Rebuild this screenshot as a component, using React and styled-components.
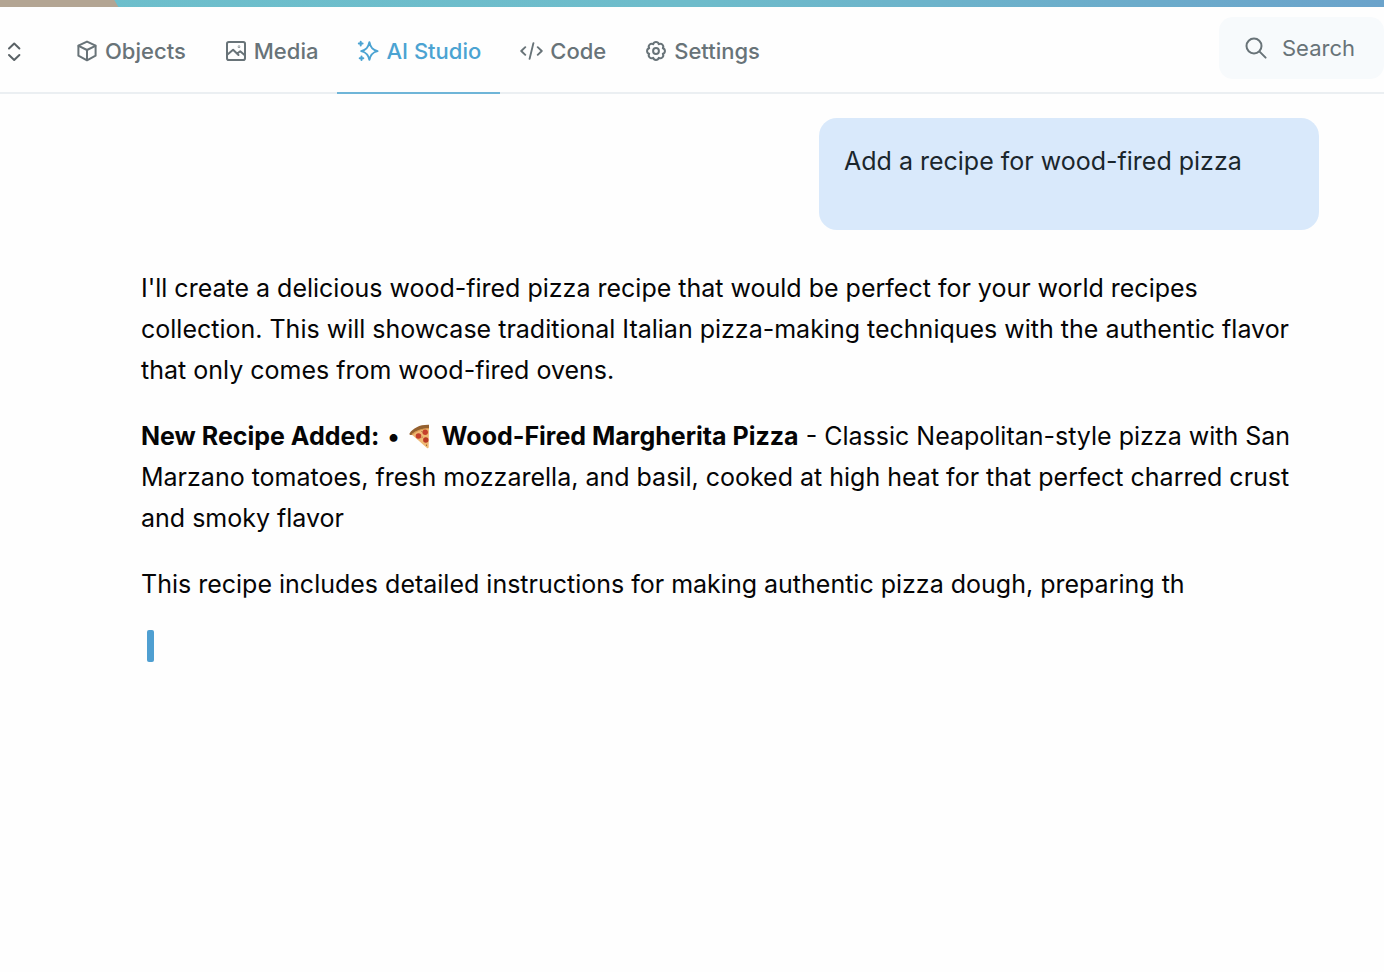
import styled, { createGlobalStyle } from "styled-components";

const GlobalStyle = createGlobalStyle`
  * {
    box-sizing: border-box;
  }
  body {
    margin: 0;
    background: #fefefe;
    color: #050506;
    font-family: Inter, "Liberation Sans", sans-serif;
  }
`;
const Strip = styled.div`
  height: 7px;
  background: linear-gradient(60deg, #b3a593 102px, transparent 103px),
    linear-gradient(90deg, #6dbfcc 0%, #6ebccb 50%, #6ba3cb 100%);
`;
const Header = styled.header`
  display: flex;
  justify-content: space-between;
  border-bottom: 2px solid #ebeff2;
`;
const Left = styled.div`
  display: flex;
  align-items: stretch;
  gap: 34px;
`;
const Switcher = styled.button`
  display: flex;
  align-items: center;
  padding: 4px 0 0 6px;
  border: none;
  background: none;
  color: #5a6266;
  cursor: pointer;
`;
const Nav = styled.nav`
  display: flex;
`;
const Tab = styled.a`
  display: flex;
  align-items: center;
  gap: 7px;
  height: 87px;
  margin-bottom: -2px;
  padding: 2px 19px 0 20px;
  border-bottom: 2px solid ${(props) => (props.$active ? "#6fb5d8" : "transparent")};
  color: ${(props) => (props.$active ? "#4ba3d2" : "#687378")};
  font-size: 22px;
  font-weight: 500;
  line-height: 32px;
  text-decoration: none;
`;
const SearchBox = styled.label`
  display: flex;
  align-items: center;
  gap: 14px;
  height: 62px;
  margin-top: 10px;
  padding: 0 0 0 25px;
  border-radius: 14px;
  background: #f7fafc;
  color: #687378;
`;
const SearchInput = styled.input`
  width: 102px;
  padding: 0;
  border: none;
  outline: none;
  background: none;
  color: #687378;
  font-family: inherit;
  font-size: 22px;
  line-height: 32px;
  &::placeholder {
    color: #687378;
    opacity: 1;
  }
`;
const Chat = styled.main`
  display: flex;
  flex-direction: column;
  gap: 38px;
  padding: 24px 65px 48px 141px;
  font-size: 25px;
  line-height: 41px;
`;
const Paragraph = styled.p`
  margin: 0 0 25px;
`;
const Bubble = styled.div`
  align-self: flex-end;
  width: 500px;
  max-width: 100%;
  padding: 23px 25px;
  border-radius: 18px;
  background: #d9e9fb;
  color: #1b262c;
`;
const Caret = styled.div`
  width: 7px;
  height: 32px;
  margin-left: 6px;
  border-radius: 2px;
  background: #4f9fd1;
`;
const Pizza = styled.svg`
  margin: 0 5px 0 1px;
  vertical-align: -4px;
`;
const Icon = styled.svg`
  flex: none;
  fill: none;
  stroke: currentColor;
  stroke-width: 2;
  stroke-linecap: round;
  stroke-linejoin: round;
`;

const CubeIcon = () => (
  <Icon width="22" height="22" viewBox="0 0 22 22">
    <path d="M11 1.6 19.6 5.7V15.7L11 20.3 2.4 15.7V5.7Z" />
    <path d="M2.6 5.9 11 10l8.4-4.1M11 10v10" />
  </Icon>
);

const MediaIcon = () => (
  <Icon width="22" height="22" viewBox="0 0 22 22">
    <rect x="2" y="2" width="18" height="18" rx="1.8" />
    <path d="m2.5 14.5 5.6-4.7 5.4 5.2M12.2 13.5l3-2.3 4.6 4" />
    <circle cx="14" cy="6.7" r="0.3" />
  </Icon>
);

const SparkIcon = () => (
  <Icon width="22" height="22" viewBox="0 0 22 22">
    <path d="M12.4 2.2c1.1 5.2 3 7.6 8.2 8.9-5.2 1.3-7.1 3.6-8.2 8.7-1.1-5.1-3-7.4-8.2-8.7 5.2-1.3 7.1-3.7 8.2-8.9Z" />
    <path d="M3.7 1.7v3.8M1.8 3.6h3.8M4.5 16.4v3.6M2.7 18.2h3.6" />
  </Icon>
);

const CodeIcon = () => (
  <Icon width="23" height="22" viewBox="0 0 24 22">
    <path d="M5.5 7 1.3 11l4.2 4M18.5 7l4.2 4-4.2 4M14 2.8l-4 16.4" />
  </Icon>
);

const GearIcon = () => (
  <Icon width="22" height="22" viewBox="0 0 22 22">
    <path d="M17.8 8.2a2.9 2.9 0 0 1 0 5.6 2.9 2.9 0 0 1-4 4 2.9 2.9 0 0 1-5.6 0 2.9 2.9 0 0 1-4-4 2.9 2.9 0 0 1 0-5.6 2.9 2.9 0 0 1 4-4 2.9 2.9 0 0 1 5.6 0 2.9 2.9 0 0 1 4 4Z" />
    <circle cx="11" cy="11" r="2.9" />
  </Icon>
);

const PizzaIcon = () => (
  <Pizza width="21" height="25" viewBox="0 0 21 25" role="img" aria-label="pizza">
    <path d="M1.5 9.5 18 24q1.5.8 1.7-1L20 2Z" fill="#efb873" />
    <path d="M.5 9.5C4 4 11 .5 20 .8v3.4C13 4.5 6.5 7 2.5 11 1 11 .2 10.5.5 9.5Z" fill="#94602f" />
    <path d="M3 10.5C7 7 13 4.7 20 4.5" fill="none" stroke="#d99a4e" strokeWidth="1.2" />
    <circle cx="9.5" cy="12" r="2.8" fill="#c5402b" />
    <circle cx="16.2" cy="8.3" r="2.7" fill="#c5402b" />
    <circle cx="16.8" cy="16" r="2.7" fill="#b93924" />
    <path d="M12.5 7.2l1 1M12.7 13.5l1-.5M17.5 20.5v1.5" stroke="#a06a35" />
  </Pizza>
);

const tabs = [
  { label: "Objects", icon: CubeIcon },
  { label: "Media", icon: MediaIcon },
  { label: "AI Studio", icon: SparkIcon, active: true },
  { label: "Code", icon: CodeIcon },
  { label: "Settings", icon: GearIcon },
];

function TopBar() {
  return (
    <Header>
      <Left>
        <Switcher aria-label="Switch project">
          <Icon width="16" height="22" viewBox="0 0 16 22">
            <path d="m3 7.5 5.2-5 5.2 5M3 14l5.2 5 5.2-5" />
          </Icon>
        </Switcher>
        <Nav>
          {tabs.map(({ label, icon: TabIcon, active }) => (
            <Tab key={label} href="#" $active={active}>
              <TabIcon />
              {label}
            </Tab>
          ))}
        </Nav>
      </Left>
      <SearchBox>
        <Icon width="24" height="24" viewBox="0 0 24 24">
          <circle cx="10" cy="10" r="7.5" />
          <path d="m15.6 15.6 6 6" />
        </Icon>
        <SearchInput type="text" placeholder="Search" aria-label="Search" />
      </SearchBox>
    </Header>
  );
}

function App() {
  return (
    <>
      <GlobalStyle />
      <Strip />
      <TopBar />
      <Chat>
        <Bubble>
          <Paragraph>Add a recipe for wood-fired pizza</Paragraph>
        </Bubble>
        <div>
          <Paragraph>
            I'll create a delicious wood-fired pizza recipe that would be perfect for your world
            recipes collection. This will showcase traditional Italian pizza-making techniques with
            the authentic flavor that only comes from wood-fired ovens.
          </Paragraph>
          <Paragraph>
            <strong>New Recipe Added:</strong> • <PizzaIcon />{" "}
            <strong>Wood-Fired Margherita Pizza</strong> - Classic Neapolitan-style pizza with San
            Marzano tomatoes, fresh mozzarella, and basil, cooked at high heat for that perfect
            charred crust and smoky flavor
          </Paragraph>
          <Paragraph>
            This recipe includes detailed instructions for making authentic pizza dough, preparing
            th
          </Paragraph>
          <Caret />
        </div>
      </Chat>
    </>
  );
}

export default App;
